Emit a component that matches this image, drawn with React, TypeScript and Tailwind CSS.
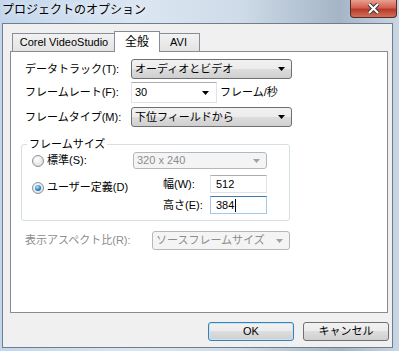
import React from 'react';

const font = "font-['Liberation_Sans','Noto_Sans_CJK_JP',sans-serif]";

const Arrow = ({ disabled = false }: { disabled?: boolean }) => (
  <svg width="7" height="4" viewBox="0 0 7 4" className="shrink-0">
    <path d="M0 0h7L3.5 4z" fill={disabled ? '#a0a0a0' : '#000'} />
  </svg>
);

const DropDown = ({ text, className }: { text: string; className: string }) => (
  <div
    className={`${className} flex items-center justify-between pl-[3px] pr-[6px] border border-[#707070] rounded-[3px] bg-[linear-gradient(#f2f2f2_0%,#ebebeb_50%,#dddddd_50%,#cfcfcf_100%)] text-black`}
  >
    <span>{text}</span>
    <Arrow />
  </div>
);

const DisabledDropDown = ({ text, className }: { text: string; className: string }) => (
  <div
    className={`${className} flex items-center justify-between pl-[3px] pr-[6px] border border-[#b5b8bb] rounded-[3px] bg-[#f4f4f4] text-[#8d8d8d]`}
  >
    <span>{text}</span>
    <Arrow disabled />
  </div>
);

const Radio = ({ checked = false }: { checked?: boolean }) => (
  <div className="w-[12px] h-[12px] rounded-full border border-[#8e8f8f] bg-[radial-gradient(circle_at_40%_35%,#ffffff,#d6d6d6)] flex items-center justify-center shrink-0">
    {checked && (
      <div className="w-[6px] h-[6px] rounded-full bg-[radial-gradient(circle_at_40%_35%,#b8ebff,#1f85cf_55%,#0b4a86)]" />
    )}
  </div>
);

const TextBox = ({ value, focused = false }: { value: string; focused?: boolean }) => (
  <div
    className={`w-[57px] h-[18px] bg-white flex items-center pl-[5px] border ${
      focused ? 'border-[#a4c9e3] border-t-[#3d7bad]' : 'border-[#e2e3ea] border-t-[#abadb3]'
    }`}
  >
    <span>{value}</span>
    {focused && <span className="w-px h-[13px] bg-black ml-[1px]" />}
  </div>
);

export default function App() {
  return (
    <div
      className={`w-[399px] h-[351px] flex flex-col overflow-hidden text-[11px] leading-[15px] ${font} bg-[linear-gradient(90deg,#c3d6ec,#dbe6f2_35%,#cfdbe8_60%,#b0c0d0_78%,#a5b5c6_85%,#c9d6e3)]`}
    >
      {/* title bar */}
      <div className="h-[23px] flex items-start shrink-0">
        <div className="pl-[2px] pt-[3px] text-[12px] text-black [text-shadow:0_0_6px_#fff]">
          プロジェクトのオプション
        </div>
        <div className="ml-auto mr-[2px] w-[47px] h-[18px] rounded-b-[4px] border border-t-0 border-[#5a2a2a] bg-[linear-gradient(#e8a090,#d2614f_45%,#b83a2b_55%,#d0705a)] flex items-center justify-center">
          <svg width="13" height="11" viewBox="0 0 13 11">
            <path d="M2 1l4.5 4.5L11 1M2 10l4.5-4.5L11 10" stroke="#3a3a3a" strokeWidth="4" fill="none" />
            <path d="M2 1l4.5 4.5L11 1M2 10l4.5-4.5L11 10" stroke="#fff" strokeWidth="2" fill="none" />
          </svg>
        </div>
      </div>

      {/* client area */}
      <div className="ml-[2px] mr-[6px] mb-[3px] flex-1 border border-[#6f7e8d] bg-[#f0f0f0] flex flex-col">
        {/* tabs */}
        <div className="mt-[7px] pl-[9px] flex items-end">
          <div className="w-[104px] h-[18px] border border-b-0 border-[#898c95] bg-[linear-gradient(#f2f2f2,#e3e3e3)] flex items-center justify-center">
            Corel VideoStudio
          </div>
          <div className="relative z-10 w-[46px] h-[21px] -mx-[2px] -mb-px border border-b-0 border-[#898c95] bg-white flex items-start justify-center pt-[3px] text-[12px]">
            全般
          </div>
          <div className="w-[42px] h-[18px] border border-b-0 border-l-0 border-[#898c95] bg-[linear-gradient(#f2f2f2,#e3e3e3)] flex items-center justify-center">
            AVI
          </div>
        </div>

        {/* tab panel */}
        <div className="ml-[7px] w-[378px] h-[262px] border border-[#898c95] bg-white flex flex-col">
          <div className="mt-[7px] pl-[14px] flex items-center">
            <span className="w-[106px]">データトラック(T):</span>
            <DropDown text="オーディオとビデオ" className="w-[161px] h-[20px]" />
          </div>
          <div className="mt-[3px] pl-[14px] flex items-center">
            <span className="w-[106px]">フレームレート(F):</span>
            <div className="w-[86px] h-[21px] border border-[#e2e3ea] border-t-[#abadb3] bg-white flex items-center justify-between pl-[3px] pr-[7px]">
              <span>30</span>
              <Arrow />
            </div>
            <span className="ml-[3px]">フレーム/秒</span>
          </div>
          <div className="mt-[4px] pl-[14px] flex items-center">
            <span className="w-[106px]">フレームタイプ(M):</span>
            <DropDown text="下位フィールドから" className="w-[161px] h-[20px]" />
          </div>

          {/* frame size group */}
          <fieldset className="mt-[10px] ml-[10px] w-[269px] border border-[#d5dfe5] rounded-[3px] pl-[10px] pb-[6px]">
            <legend className="ml-[-5px] px-[2px]">フレームサイズ</legend>
            <div className="flex items-center h-[17px]">
              <div className="w-[101px] flex items-center">
                <Radio />
                <span className="ml-[3px]">標準(S):</span>
              </div>
              <DisabledDropDown text="320 x 240" className="w-[134px] h-[17px]" />
            </div>
            <div className="mt-[6px] flex">
              <div className="w-[131px] pt-[5px] flex items-center self-start">
                <Radio checked />
                <span className="ml-[3px]">ユーザー定義(D)</span>
              </div>
              <div className="flex flex-col gap-[3px]">
                <div className="flex items-center">
                  <span className="w-[47px]">幅(W):</span>
                  <TextBox value="512" />
                </div>
                <div className="flex items-center">
                  <span className="w-[47px]">高さ(E):</span>
                  <TextBox value="384" focused />
                </div>
              </div>
            </div>
          </fieldset>

          <div className="mt-[10px] pl-[14px] flex items-center">
            <span className="w-[127px] text-[#8d8d8d]">表示アスペクト比(R):</span>
            <DisabledDropDown text="ソースフレームサイズ" className="w-[138px] h-[19px]" />
          </div>
        </div>

        {/* buttons */}
        <div className="mt-[9px] pl-[205px] flex gap-[9px]">
          <div className="w-[86px] h-[19px] rounded-[3px] border border-[#3c7fb1] shadow-[inset_0_0_0_1px_#c4e5f6] bg-[linear-gradient(#f2f2f2_0%,#ebebeb_50%,#dddddd_50%,#cfcfcf_100%)] flex items-center justify-center text-black">
            OK
          </div>
          <div className="w-[86px] h-[19px] rounded-[3px] border border-[#707070] bg-[linear-gradient(#f2f2f2_0%,#ebebeb_50%,#dddddd_50%,#cfcfcf_100%)] flex items-center justify-center text-black">
            キャンセル
          </div>
        </div>
      </div>
    </div>
  );
}
